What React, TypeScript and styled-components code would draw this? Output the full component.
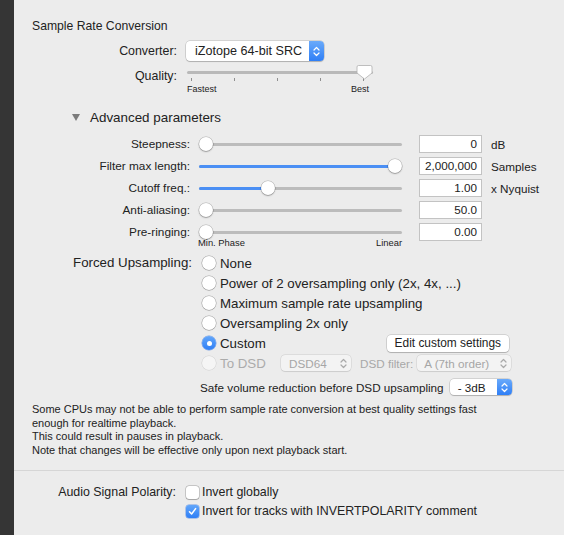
import React from 'react';
import styled, { createGlobalStyle } from 'styled-components';

const GlobalStyle = createGlobalStyle`
  html, body { margin: 0; padding: 0; background: #ececec; }
  body {
    font-family: "Liberation Sans", Arial, sans-serif;
    color: #222;
    -webkit-font-smoothing: antialiased;
  }
`;

const Window = styled.div`
  display: flex;
  width: 564px;
  height: 535px;
  overflow: hidden;
`;

const Strip = styled.div`
  width: 14px;
  flex-shrink: 0;
  background: #353535;
`;

const Panel = styled.div`
  flex: 1;
  display: flex;
  flex-direction: column;
  background: #ececec;
`;

const Heading = styled.div`
  margin: 18px 0 0 18px;
  height: 16px;
  line-height: 16px;
  font-size: 12.2px;
`;

const Row = styled.div<{ $top: number; $h: number }>`
  display: flex;
  align-items: center;
  margin-top: ${p => p.$top}px;
  height: ${p => p.$h}px;
  flex-shrink: 0;
`;

const Label = styled.div<{ $w: number; $size?: number; $gap?: number; $top?: number }>`
  width: ${p => p.$w}px;
  margin-right: ${p => p.$gap ?? 9}px;
  flex-shrink: 0;
  text-align: right;
  font-size: ${p => p.$size ?? 12.4}px;
  white-space: nowrap;
  align-self: ${p => (p.$top !== undefined ? 'flex-start' : 'auto')};
  padding-top: ${p => p.$top ?? 0}px;
  line-height: 16px;
`;

/* ---------- Popup buttons ---------- */
const Popup = styled.div<{ $w: number; $h: number; $ml?: number; $disabled?: boolean; $size?: number; $pad: number }>`
  display: flex;
  align-items: stretch;
  width: ${p => p.$w}px;
  height: ${p => p.$h}px;
  margin-left: ${p => p.$ml ?? 0}px;
  box-sizing: border-box;
  flex-shrink: 0;
  background: ${p => (p.$disabled ? '#f3f3f3' : '#ffffff')};
  border-radius: 4px;
  box-shadow: ${p =>
    p.$disabled
      ? '0 0 0 0.5px rgba(0,0,0,0.12), 0 0.5px 1px rgba(0,0,0,0.08)'
      : '0 0 0 0.5px rgba(0,0,0,0.22), 0 1px 1px rgba(0,0,0,0.16)'};
  font-size: ${p => p.$size ?? 11.7}px;
  color: ${p => (p.$disabled ? '#a6a6a6' : '#222')};
  padding-left: ${p => p.$pad}px;
`;

const PopupText = styled.span`
  flex: 1;
  display: flex;
  align-items: center;
  white-space: nowrap;
`;

const Stepper = styled.span<{ $blue?: boolean }>`
  width: 15px;
  flex-shrink: 0;
  display: flex;
  align-items: center;
  justify-content: center;
  border-radius: 0 4px 4px 0;
  background: ${p => (p.$blue ? 'linear-gradient(#6aaafa, #2f7ff6)' : 'transparent')};
`;

const Chevrons = ({ color }: { color: string }) => (
  <svg width="7" height="11" viewBox="0 0 7 11" fill="none">
    <path d="M1 4 L3.5 1.5 L6 4" stroke={color} strokeWidth="1.2" strokeLinecap="round" strokeLinejoin="round" />
    <path d="M1 7 L3.5 9.5 L6 7" stroke={color} strokeWidth="1.2" strokeLinecap="round" strokeLinejoin="round" />
  </svg>
);

const PushButton = styled.div<{ $ml: number }>`
  margin-left: ${p => p.$ml}px;
  width: 122px;
  height: 17px;
  box-sizing: border-box;
  border-radius: 4px;
  background: #fff;
  box-shadow: 0 0 0 0.5px rgba(0,0,0,0.22), 0 1px 1px rgba(0,0,0,0.16);
  display: flex;
  align-items: center;
  justify-content: center;
  font-size: 11.9px;
  white-space: nowrap;
`;

/* ---------- Quality tick slider ---------- */
const TickSlider = styled.div`
  position: relative;
  width: 186px;
  height: 34px;
  align-self: flex-start;
`;

const TickTrack = styled.div`
  margin-top: 7px;
  height: 3px;
  border-radius: 2px;
  background: #b9b9b9;
`;

const Ticks = styled.div`
  display: flex;
  justify-content: space-between;
  padding: 0 9px 0 4px;
  margin-top: 4px;
  height: 3px;
`;

const Tick = styled.span`
  width: 1px;
  height: 3px;
  background: #8f8f8f;
`;

const TickLabels = styled.div`
  display: flex;
  justify-content: space-between;
  width: 182px;
  margin-top: 3px;
  font-size: 9px;
  line-height: 10px;
`;

const PointerKnob = styled.svg`
  position: absolute;
  top: 1px;
`;

/* ---------- Disclosure ---------- */
const Disclosure = styled.div`
  display: flex;
  align-items: center;
  margin: 10px 0 0 58px;
  height: 18px;
  font-size: 13.4px;
`;

const Triangle = styled.span`
  width: 0;
  height: 0;
  border-left: 4.5px solid transparent;
  border-right: 4.5px solid transparent;
  border-top: 7px solid #7b7b7b;
  margin-right: 10px;
`;

/* ---------- Continuous slider ---------- */
const Slider = styled.div<{ $w: number }>`
  position: relative;
  width: ${p => p.$w}px;
  height: 16px;
  flex-shrink: 0;
`;

const SliderBar = styled.div`
  position: absolute;
  left: 0;
  right: 0;
  top: 7px;
  height: 3px;
  border-radius: 2px;
  background: #bcbcbc;
  overflow: hidden;
`;

const SliderFill = styled.div`
  height: 100%;
  background: #4b8ff4;
`;

const Knob = styled.div`
  position: absolute;
  top: 1px;
  width: 14px;
  height: 14px;
  box-sizing: border-box;
  border-radius: 50%;
  background: #fff;
  box-shadow: 0 0 0 0.5px rgba(0,0,0,0.25), 0 1px 1.5px rgba(0,0,0,0.25);
`;

const Field = styled.div`
  margin-left: 17px;
  width: 63px;
  height: 18px;
  box-sizing: border-box;
  border: 1px solid #c3c3c3;
  background: #fff;
  font-size: 11.7px;
  text-align: right;
  padding-right: 4px;
  line-height: 16px;
  flex-shrink: 0;
`;

const Unit = styled.span`
  margin-left: 9px;
  font-size: 11.7px;
  white-space: nowrap;
`;

const ScaleLabels = styled.div`
  display: flex;
  justify-content: space-between;
  margin: -6px 0 0 184px;
  width: 204px;
  height: 12px;
  line-height: 12px;
  font-size: 9.4px;
  flex-shrink: 0;
`;

/* ---------- Radios ---------- */
const RadioGroupRow = styled.div`
  display: flex;
  margin-top: 4px;
  flex-shrink: 0;
`;

const RadioList = styled.div`
  display: flex;
  flex-direction: column;
  width: 309px;
`;

const RadioLine = styled.div`
  display: flex;
  align-items: center;
  height: 20px;
`;

const RadioOption = styled.label<{ $disabled?: boolean; $w?: number }>`
  display: flex;
  align-items: center;
  gap: 4px;
  font-size: 13.3px;
  white-space: nowrap;
  color: ${p => (p.$disabled ? '#ababab' : '#222')};
  width: ${p => (p.$w ? `${p.$w}px` : 'auto')};
  flex-shrink: 0;
`;

const RadioCircle = styled.span<{ $checked?: boolean; $disabled?: boolean }>`
  width: 14px;
  height: 14px;
  box-sizing: border-box;
  border-radius: 50%;
  flex-shrink: 0;
  display: flex;
  align-items: center;
  justify-content: center;
  background: ${p =>
    p.$checked ? 'linear-gradient(#62a6fa, #2f7ff6)' : p.$disabled ? '#f5f5f5' : '#fff'};
  box-shadow: ${p =>
    p.$checked
      ? '0 0 0 0.5px rgba(30,100,220,0.6)'
      : p.$disabled
      ? '0 0 0 0.5px rgba(0,0,0,0.12)'
      : '0 0 0 0.5px rgba(0,0,0,0.3), 0 0.5px 1px rgba(0,0,0,0.18)'};
  &::after {
    content: '';
    display: ${p => (p.$checked ? 'block' : 'none')};
    width: 5px;
    height: 5px;
    border-radius: 50%;
    background: #fff;
  }
`;

const DimLabel = styled.span`
  margin-left: 9px;
  font-size: 11.7px;
  color: #a8a8a8;
  white-space: nowrap;
`;

const SafeText = styled.span`
  margin-left: 186px;
  font-size: 11.7px;
  white-space: nowrap;
`;

const Notes = styled.p`
  margin: 6px 0 0 18px;
  font-size: 11px;
  line-height: 13.67px;
  white-space: nowrap;
`;

const Separator = styled.hr`
  margin: 12px 0 0 0;
  border: none;
  height: 1px;
  background: #d6d6d6;
  flex-shrink: 0;
`;

const CheckRow = styled.div<{ $top: number }>`
  display: flex;
  align-items: center;
  height: 19px;
  margin-top: ${p => p.$top}px;
`;

const CheckOption = styled.label<{ $ml?: number }>`
  display: flex;
  align-items: center;
  gap: 3px;
  margin-left: ${p => p.$ml ?? 0}px;
  font-size: 12.4px;
  white-space: nowrap;
`;

const CheckBox = styled.span<{ $checked?: boolean }>`
  width: 13px;
  height: 13px;
  box-sizing: border-box;
  border-radius: 3px;
  display: flex;
  align-items: center;
  justify-content: center;
  background: ${p => (p.$checked ? 'linear-gradient(#62a6fa, #2f7ff6)' : '#fff')};
  box-shadow: ${p =>
    p.$checked
      ? '0 0 0 0.5px rgba(30,100,220,0.6)'
      : '0 0 0 0.5px rgba(0,0,0,0.3), 0 0.5px 1px rgba(0,0,0,0.18)'};
`;

/* ---------- data ---------- */
const SLIDER_W = 203;
const KNOB = 14;

type SliderRow = { label: string; value: number; fill: boolean; field: string; unit?: string };

const sliderRows: SliderRow[] = [
  { label: 'Steepness:', value: 0, fill: false, field: '0', unit: 'dB' },
  { label: 'Filter max length:', value: 1, fill: true, field: '2,000,000', unit: 'Samples' },
  { label: 'Cutoff freq.:', value: 0.33, fill: true, field: '1.00', unit: 'x Nyquist' },
  { label: 'Anti-aliasing:', value: 0, fill: false, field: '50.0' },
  { label: 'Pre-ringing:', value: 0, fill: false, field: '0.00' },
];

const ContinuousSlider = ({ value, fill }: { value: number; fill: boolean }) => {
  const left = value * (SLIDER_W - KNOB);
  return (
    <Slider $w={SLIDER_W}>
      <SliderBar>{fill && <SliderFill style={{ width: left + KNOB / 2 }} />}</SliderBar>
      <Knob style={{ left }} />
    </Slider>
  );
};

export default function App() {
  return (
    <>
      <GlobalStyle />
      <Window>
        <Strip />
        <Panel>
          <Heading>Sample Rate Conversion</Heading>

          <Row $top={7} $h={20}>
            <Label $w={163} $gap={9}>Converter:</Label>
            <Popup $w={138} $h={20} $pad={9} $size={12.6}>
              <PopupText>iZotope 64-bit SRC</PopupText>
              <Stepper $blue>
                <Chevrons color="#fff" />
              </Stepper>
            </Popup>
          </Row>

          <Row $top={3} $h={34}>
            <Label $w={163} $gap={10} $top={4}>Quality:</Label>
            <TickSlider>
              <TickTrack />
              <Ticks>
                {[0, 1, 2, 3, 4].map(i => (
                  <Tick key={i} />
                ))}
              </Ticks>
              <TickLabels>
                <span>Fastest</span>
                <span>Best</span>
              </TickLabels>
              <PointerKnob width="17" height="15" viewBox="0 0 17 15" style={{ left: 169 }}>
                <path
                  d="M2.5 0.5 H14.5 Q16 0.5 16 2 V8 L8.5 14 L1 8 V2 Q1 0.5 2.5 0.5 Z"
                  fill="#fff"
                  stroke="#b0b0b0"
                  strokeWidth="0.8"
                />
              </PointerKnob>
            </TickSlider>
          </Row>

          <Disclosure>
            <Triangle />
            Advanced parameters
          </Disclosure>

          {sliderRows.map((r, i) => (
            <Row key={r.label} $top={i === 0 ? 7 : 0} $h={22}>
              <Label $w={176} $gap={9} $size={11.8}>
                {r.label}
              </Label>
              <ContinuousSlider value={r.value} fill={r.fill} />
              <Field>{r.field}</Field>
              {r.unit && <Unit>{r.unit}</Unit>}
            </Row>
          ))}
          <ScaleLabels>
            <span>Min. Phase</span>
            <span>Linear</span>
          </ScaleLabels>

          <RadioGroupRow>
            <Label $w={178} $gap={10} $top={2} $size={13.3}>Forced Upsampling:</Label>
            <RadioList>
              <RadioLine>
                <RadioOption>
                  <RadioCircle />
                  None
                </RadioOption>
              </RadioLine>
              <RadioLine>
                <RadioOption>
                  <RadioCircle />
                  Power of 2 oversampling only (2x, 4x, ...)
                </RadioOption>
              </RadioLine>
              <RadioLine>
                <RadioOption>
                  <RadioCircle />
                  Maximum sample rate upsampling
                </RadioOption>
              </RadioLine>
              <RadioLine>
                <RadioOption>
                  <RadioCircle />
                  Oversampling 2x only
                </RadioOption>
              </RadioLine>
              <RadioLine>
                <RadioOption>
                  <RadioCircle $checked />
                  Custom
                </RadioOption>
                <PushButton $ml={121}>Edit custom settings</PushButton>
              </RadioLine>
              <RadioLine>
                <RadioOption $disabled $w={79}>
                  <RadioCircle $disabled />
                  To DSD
                </RadioOption>
                <Popup $w={70} $h={16} $pad={8} $disabled>
                  <PopupText>DSD64</PopupText>
                  <Stepper>
                    <Chevrons color="#a9a9a9" />
                  </Stepper>
                </Popup>
                <DimLabel>DSD filter:</DimLabel>
                <Popup $w={94} $h={16} $pad={7} $ml={4} $disabled>
                  <PopupText>A (7th order)</PopupText>
                  <Stepper>
                    <Chevrons color="#a9a9a9" />
                  </Stepper>
                </Popup>
              </RadioLine>
            </RadioList>
          </RadioGroupRow>

          <Row $top={4} $h={20}>
            <SafeText>Safe volume reduction before DSD upsampling</SafeText>
            <Popup $w={62} $h={16} $pad={8} $ml={6}>
              <PopupText>- 3dB</PopupText>
              <Stepper $blue>
                <Chevrons color="#fff" />
              </Stepper>
            </Popup>
          </Row>

          <Notes>
            Some CPUs may not be able to perform sample rate conversion at best quality settings fast
            <br />
            enough for realtime playback.
            <br />
            This could result in pauses in playback.
            <br />
            Note that changes will be effective only upon next playback start.
          </Notes>

          <Separator />

          <CheckRow $top={12}>
            <Label $w={162} $gap={10}>Audio Signal Polarity:</Label>
            <CheckOption>
              <CheckBox />
              Invert globally
            </CheckOption>
          </CheckRow>
          <CheckRow $top={0}>
            <CheckOption $ml={172}>
              <CheckBox $checked>
                <svg width="9" height="9" viewBox="0 0 9 9" fill="none">
                  <path d="M1.5 4.8 L3.6 7 L7.6 1.6" stroke="#fff" strokeWidth="1.5" strokeLinecap="round" strokeLinejoin="round" />
                </svg>
              </CheckBox>
              Invert for tracks with INVERTPOLARITY comment
            </CheckOption>
          </CheckRow>
        </Panel>
      </Window>
    </>
  );
}
